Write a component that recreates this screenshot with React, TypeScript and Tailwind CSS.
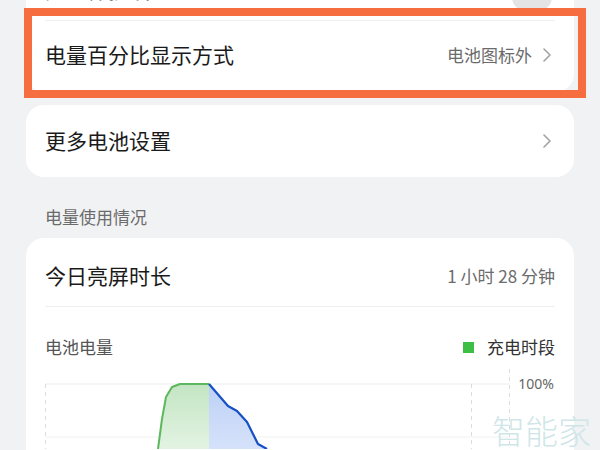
const font = "font-['Noto_Sans_CJK_SC','Noto_Sans',sans-serif]";

function Chevron() {
  return (
    <svg width="10" height="16" viewBox="0 0 10 16" fill="none">
      <path d="M2 2 L8 8 L2 14" stroke="#a3a3a3" strokeWidth="1.6" strokeLinecap="round" strokeLinejoin="round" />
    </svg>
  );
}

function BatteryChart() {
  return (
    <svg width="515" height="80" viewBox="0 0 515 80" className="block">
      <defs>
        <linearGradient id="greenFill" x1="0" y1="0" x2="0" y2="1">
          <stop offset="0" stopColor="#c3e5c3" />
          <stop offset="1" stopColor="#e3f3e3" />
        </linearGradient>
        <linearGradient id="blueFill" x1="0" y1="0" x2="0" y2="1">
          <stop offset="0" stopColor="#bcd0f6" />
          <stop offset="1" stopColor="#d6e2fa" />
        </linearGradient>
      </defs>
      <line x1="0" y1="15" x2="464" y2="15" stroke="#ececec" strokeWidth="1" />
      <line x1="0" y1="68" x2="464" y2="68" stroke="#f1f1f1" strokeWidth="1" />
      <line x1="0.5" y1="15" x2="0.5" y2="80" stroke="#dcdcdc" strokeDasharray="4 4" />
      <line x1="426.5" y1="15" x2="426.5" y2="80" stroke="#dcdcdc" strokeDasharray="4 4" />
      <line x1="464.5" y1="0" x2="464.5" y2="80" stroke="#dcdcdc" strokeDasharray="4 4" />
      <path d="M113 80 L117 50 L121 28 L127 18 L135 15 L164 15 L164 80 Z" fill="url(#greenFill)" />
      <path d="M113 80 L117 50 L121 28 L127 18 L135 15 L164 15" stroke="#5cb85c" strokeWidth="2" fill="none" strokeLinejoin="round" />
      <path d="M164 15 L183 37 L192 42 L202 53 L213 75 L222 80 L164 80 Z" fill="url(#blueFill)" />
      <path d="M164 15 L183 37 L192 42 L202 53 L213 75 L222 80" stroke="#1650c4" strokeWidth="2.2" fill="none" strokeLinejoin="round" />
      <text x="509" y="20" textAnchor="end" fontSize="14" fill="#666" fontFamily="'Noto Sans', sans-serif">100%</text>
    </svg>
  );
}

export default function App() {
  return (
    <div className={`relative w-[600px] h-[450px] overflow-hidden bg-[#f1f2f4] ${font}`}>
      <div className="px-[26px]">
        <div className="-mt-[46px] rounded-[18px] bg-white">
          <div className="flex h-[66px] items-end justify-between pl-[19px] pr-[22px] pb-[15px]">
            <span className="text-[21px] text-[#1a1a1a]">充电保护设置</span>
            <div className="mb-[-6px] h-[28px] w-[40px] rounded-full bg-[#e4e4e4]" />
          </div>
          <div className="mx-[19px] h-px bg-[#efefef]" />
          <div className="flex h-[71px] items-center justify-between pb-[4px] pl-[19px] pr-[22px]">
            <span className="text-[21px] text-[#1a1a1a]">电量百分比显示方式</span>
            <div className="flex items-center gap-[10px]">
              <span className="text-[17px] text-[#6b6b6b]">电池图标外</span>
              <Chevron />
            </div>
          </div>
        </div>

        <div className="mt-[13px] flex h-[72px] items-center justify-between rounded-[18px] bg-white pl-[19px] pr-[22px]">
          <span className="text-[21px] text-[#1a1a1a]">更多电池设置</span>
          <Chevron />
        </div>

        <div className="pl-[19px] pt-[29px] pb-[10px] text-[17px] leading-[22px] text-[#6b6b6b]">电量使用情况</div>

        <div className="rounded-[18px] bg-white px-[19px] pb-[20px]">
          <div className="flex h-[68px] items-center justify-between pt-[8px]">
            <span className="text-[21px] text-[#1a1a1a]">今日亮屏时长</span>
            <span className="text-[17px] text-[#6b6b6b]">1 小时 28 分钟</span>
          </div>
          <div className="h-px bg-[#efefef]" />
          <div className="flex items-center justify-between pt-[28px] leading-[24px]">
            <span className="text-[17px] text-[#555]">电池电量</span>
            <div className="flex items-center gap-[13px]">
              <div className="h-[11px] w-[11px] bg-[#3dbf45]" />
              <span className="text-[17px] text-[#333]">充电时段</span>
            </div>
          </div>
          <div className="mt-[10px]">
            <BatteryChart />
          </div>
        </div>
      </div>

      <div className="pointer-events-none absolute left-[24px] top-[8px] h-[90px] w-[562px] border-[8px] border-[#f66e3f]" />

      <div className="pointer-events-none absolute left-[492px] top-[414px] whitespace-nowrap text-[33px] font-light leading-none text-[#cfe6e9]">智能家</div>
    </div>
  );
}
